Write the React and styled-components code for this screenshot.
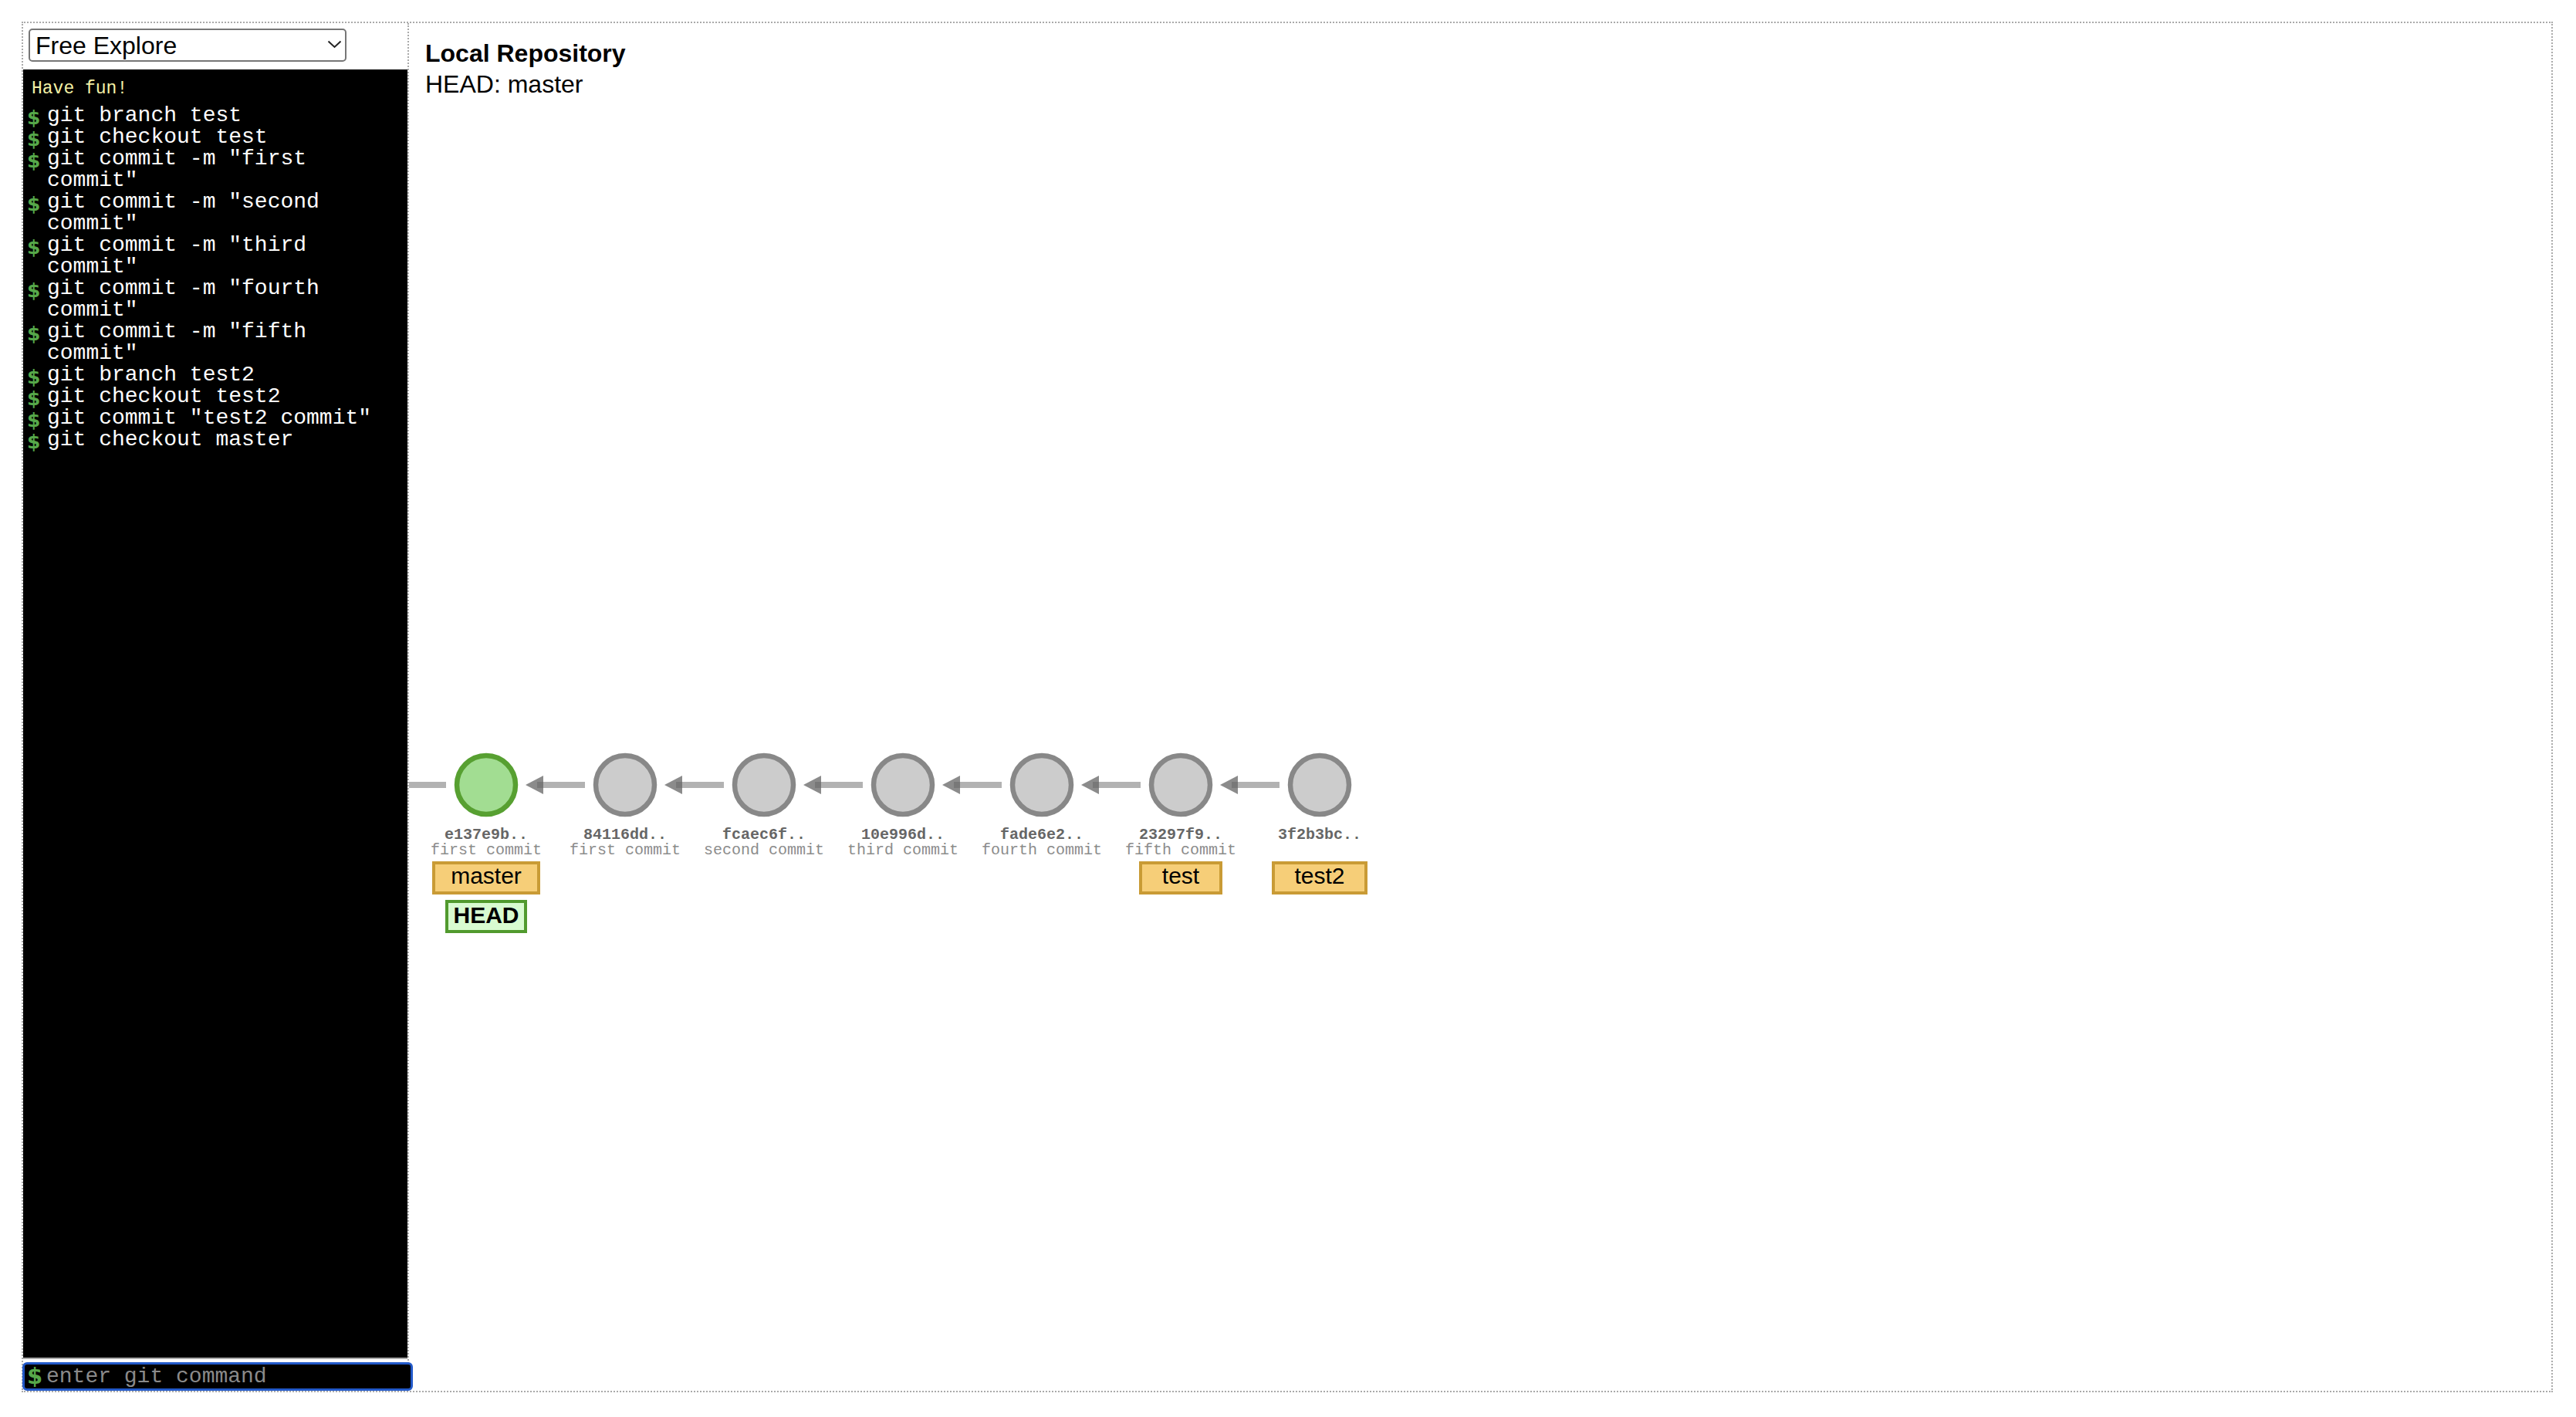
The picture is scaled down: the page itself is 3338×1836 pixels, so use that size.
import React from "react";
import styled, { createGlobalStyle } from "styled-components";

const GlobalStyle = createGlobalStyle`
  html, body { margin: 0; padding: 0; background: #fff; }
  body { font-family: "Liberation Sans", Arial, sans-serif; }
`;

const Frame = styled.div`
  box-sizing: border-box;
  margin: 28px 0 0 28px;
  width: 3280px;
  height: 1776px;
  border: 2px dotted #aaa;
  display: flex;
`;

const ControlBox = styled.div`
  box-sizing: border-box;
  width: 500px;
  flex: none;
  border-right: 2px dotted #aaa;
  display: flex;
  flex-direction: column;
`;

const SelectWrap = styled.div`
  position: relative;
  width: 412px;
  margin: 7px 0 10px 7px;
  flex: none;
`;

const Select = styled.select`
  appearance: none;
  box-sizing: border-box;
  display: block;
  width: 100%;
  height: 43px;
  border: 2px solid #767676;
  border-radius: 5px;
  background: #fff;
  color: #000;
  font: 32px "Liberation Sans", Arial, sans-serif;
  padding: 0 0 0 7px;
  margin: 0;
`;

const Chevron = styled.svg`
  position: absolute;
  left: 387px;
  top: 15px;
  pointer-events: none;
`;

const Log = styled.div`
  flex: 1 1 0;
  min-height: 0;
  overflow: hidden;
  background: #000;
  border-bottom: 2px solid #aaa;
  padding: 11px 0 0 5px;
  font-family: "Liberation Mono", "Courier New", monospace;
`;

const Info = styled.div`
  margin: 0 0 7px 6px;
  color: #f4f1a6;
  font-size: 23px;
  line-height: 28px;
`;

const Entry = styled.div`
  display: flex;
  align-items: flex-start;
  color: #fff;
  font-size: 28px;
  line-height: 28px;
`;

const Prompt = styled.span`
  flex: none;
  width: ${(p) => p.$w}px;
  height: ${(p) => p.$h}px;
  margin-left: ${(p) => p.$left || 0}px;
  margin-top: ${(p) => p.$top || 0}px;
  color: #56a84a;
  font: bold ${(p) => p.$size}px/${(p) => p.$h}px "DejaVu Sans", "Liberation Sans", sans-serif;
`;

const CommandText = styled.span`
  flex: 1;
  min-width: 0;
  white-space: pre-wrap;
`;

const InputBar = styled.label`
  box-sizing: border-box;
  display: flex;
  align-items: center;
  flex: none;
  height: 37px;
  margin: 4px -7px 0 -1px;
  background: #000;
  border: 3px solid #2259c9;
  border-radius: 6px;
  position: relative;
`;

const CommandInput = styled.input`
  flex: 1;
  min-width: 0;
  background: transparent;
  border: none;
  outline: none;
  color: #fff;
  font: 28px "Liberation Mono", "Courier New", monospace;
  padding: 0;
  margin: 0;
  &::placeholder {
    color: #8a8a8a;
  }
`;

const RepoPanel = styled.div`
  flex: 1;
  min-width: 0;
  display: flex;
  flex-direction: column;
`;

const RepoHeader = styled.div`
  flex: none;
  padding: 19px 0 0 21px;
  font-size: 32px;
  line-height: 40px;
  color: #000;
`;

const RepoTitle = styled.div`
  font-weight: bold;
`;

const Graph = styled.svg`
  display: block;
  flex: 1 1 0;
  min-height: 0;
  width: 100%;
`;

const CommitCircle = styled.circle`
  fill: ${(p) => (p.$head ? "#a2dd92" : "#cccccc")};
  stroke: ${(p) => (p.$head ? "#57a031" : "#888888")};
  stroke-width: 6.5;
`;

const Link = styled.line`
  stroke: rgba(136, 136, 136, 0.65);
  stroke-width: 8;
`;

const ArrowHead = styled.polygon`
  fill: rgba(100, 100, 100, 0.75);
`;

const CommitId = styled.text`
  font: bold 20px "Liberation Mono", "Courier New", monospace;
  fill: #666;
  text-anchor: middle;
`;

const CommitMsg = styled.text`
  font: 20px "Liberation Mono", "Courier New", monospace;
  fill: #8c8c8c;
  text-anchor: middle;
`;

const TagRect = styled.rect`
  fill: ${(p) => (p.$head ? "#d8fbd0" : "#f6ce78")};
  stroke: ${(p) => (p.$head ? "#519a2e" : "#c99b35")};
  stroke-width: 4;
`;

const TagText = styled.text`
  font: ${(p) => (p.$head ? "bold " : "")}30px "Liberation Sans", Arial, sans-serif;
  fill: #000;
  text-anchor: middle;
`;

const commands = [
  "git branch test",
  "git checkout test",
  'git commit -m "first commit"',
  'git commit -m "second commit"',
  'git commit -m "third commit"',
  'git commit -m "fourth commit"',
  'git commit -m "fifth commit"',
  "git branch test2",
  "git checkout test2",
  'git commit "test2 commit"',
  "git checkout master",
];

const commits = [
  { id: "e137e9b..", msg: "first commit", head: true },
  { id: "84116dd..", msg: "first commit" },
  { id: "fcaec6f..", msg: "second commit" },
  { id: "10e996d..", msg: "third commit" },
  { id: "fade6e2..", msg: "fourth commit" },
  { id: "23297f9..", msg: "fifth commit" },
  { id: "3f2b3bc..", msg: "" },
];

const tags = [
  { commit: 0, label: "master", w: 136 },
  { commit: 5, label: "test", w: 104 },
  { commit: 6, label: "test2", w: 120 },
];

const CY = 888;
const cx = (i) => 100 + 180 * i;

function CommitGraph() {
  return (
    <Graph>
      <Link x1={0} y1={CY} x2={cx(0) - 52} y2={CY} />
      {commits.slice(1).map((c, k) => {
        const prev = cx(k);
        return (
          <g key={"l" + k}>
            <Link x1={prev + 66} y1={CY} x2={prev + 128} y2={CY} />
            <ArrowHead
              points={`${prev + 51},${CY} ${prev + 74},${CY - 12} ${prev + 74},${CY + 12}`}
            />
          </g>
        );
      })}
      {commits.map((c, i) => (
        <g key={c.id}>
          <CommitCircle cx={cx(i)} cy={CY} r={38} $head={c.head} />
          <CommitId x={cx(i)} y={CY + 70}>
            {c.id}
          </CommitId>
          {c.msg && (
            <CommitMsg x={cx(i)} y={CY + 90}>
              {c.msg}
            </CommitMsg>
          )}
        </g>
      ))}
      {tags.map((t) => (
        <g key={t.label}>
          <TagRect x={cx(t.commit) - t.w / 2} y={CY + 101} width={t.w} height={39} />
          <TagText x={cx(t.commit)} y={CY + 128}>
            {t.label}
          </TagText>
        </g>
      ))}
      <TagRect x={cx(0) - 51} y={CY + 151} width={102} height={39} $head />
      <TagText x={cx(0)} y={CY + 179} $head>
        HEAD
      </TagText>
    </Graph>
  );
}

export default function App() {
  return (
    <>
      <GlobalStyle />
      <Frame>
        <ControlBox>
          <SelectWrap>
            <Select defaultValue="free">
              <option value="free">Free Explore</option>
            </Select>
            <Chevron width="19" height="11" viewBox="0 0 19 11">
              <polyline points="1.5,1.5 9.5,9 17.5,1.5" fill="none" stroke="#222" strokeWidth="2" />
            </Chevron>
          </SelectWrap>
          <Log>
            <Info>Have fun!</Info>
            {commands.map((cmd, i) => (
              <Entry key={i}>
                <Prompt $w={26} $h={22} $top={6} $size={25}>$</Prompt>
                <CommandText>{cmd}</CommandText>
              </Entry>
            ))}
          </Log>
          <InputBar>
            <Prompt $w={25} $h={31} $left={3} $size={29}>$</Prompt>
            <CommandInput type="text" placeholder="enter git command" />
          </InputBar>
        </ControlBox>
        <RepoPanel>
          <RepoHeader>
            <RepoTitle>Local Repository</RepoTitle>
            <div>HEAD: master</div>
          </RepoHeader>
          <CommitGraph />
        </RepoPanel>
      </Frame>
    </>
  );
}
